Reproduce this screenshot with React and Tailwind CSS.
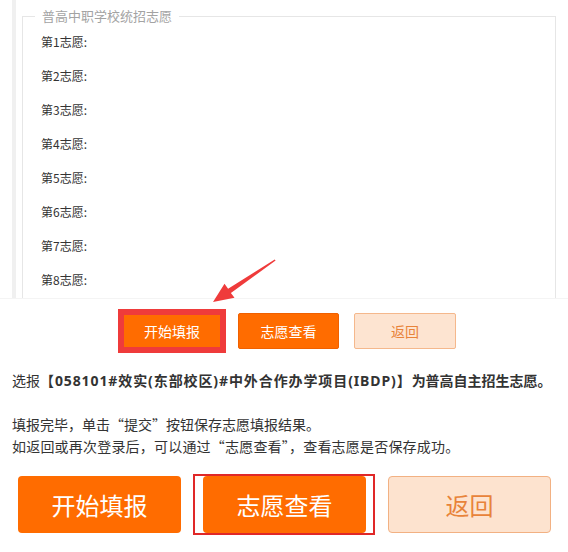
import React from "react";

const font = { fontFamily: '"Noto Sans CJK SC", "Noto Sans", sans-serif' };
const latinFirst = { fontFamily: '"Noto Sans", "Noto Sans CJK SC", sans-serif' };

function Row({ n }) {
  return (
    <div className="h-[34px] flex items-center pl-[18px] text-[12px] text-[#333]">
      第{n}志愿:
    </div>
  );
}

export default function App() {
  const rows = [1, 2, 3, 4, 5, 6, 7, 8];
  return (
    <div
      className="relative w-[568px] h-[552px] bg-white overflow-hidden"
      style={font}
    >
      {/* Top panel */}
      <div className="h-[299px] flex pl-[12px] border-b border-[#f4f4f4] overflow-hidden">
        <div className="w-[4px] bg-[#f0f0f0]" />
        <div className="ml-[6px] mt-[16px] w-[534px] relative border-t border-x border-[#e6e6e6]">
          <span className="absolute -top-[11px] left-[12px] bg-white px-[7px] text-[13px] leading-[20px] text-[#a3a3a3]">
            普高中职学校统招志愿
          </span>
          <div className="pt-[8px] flex flex-col">
            {rows.map((n) => (
              <Row key={n} n={n} />
            ))}
          </div>
        </div>
      </div>

      {/* Small buttons row */}
      <div className="mt-[10px] flex items-center pl-[118px]">
        <div className="border-[6px] border-[#ef3b3b]">
          <div className="w-[96px] h-[32px] bg-[#ff6c00] text-white text-[14px] flex items-center justify-center">
            开始填报
          </div>
        </div>
        <div className="ml-[12px] w-[101px] h-[36px] rounded-[2px] bg-[#ff6c00] border border-[#f06000] text-white text-[14px] flex items-center justify-center">
          志愿查看
        </div>
        <div className="ml-[15px] w-[102px] h-[36px] rounded-[2px] bg-[#fde4d1] border border-[#f5b88c] text-[#e8833a] text-[14px] flex items-center justify-center">
          返回
        </div>
      </div>

      {/* Arrow */}
      <svg
        className="absolute left-0 top-0 pointer-events-none"
        width="568"
        height="552"
        viewBox="0 0 568 552"
      >
        <polygon
          points="213,302 224.5,283.8 228.1,288.7 274.7,259.6 275.6,260.6 230.9,292.9 234.5,297.8"
          fill="#ef3b3b"
        />
      </svg>

      {/* Text */}
      <div className="pl-[12px] mt-[16px] text-[14px] leading-[22px] text-[#333]">
        <div className="whitespace-nowrap">
          选报
          <span className="font-bold tracking-[0.9px]" style={latinFirst}>
            【058101#效实(东部校区)#中外合作办学项目(IBDP)】
          </span>
          <span className="font-bold">为普高自主招生志愿。</span>
        </div>
        <div className="mt-[21px]">填报完毕，单击“提交”按钮保存志愿填报结果。</div>
        <div className="tracking-[0.2px]">如返回或再次登录后，可以通过“志愿查看”，查看志愿是否保存成功。</div>
      </div>

      {/* Big buttons */}
      <div className="mt-[17px] flex items-center pl-[18px]">
        <div className="w-[163px] h-[57px] rounded-[4px] bg-[#ff6c00] text-white text-[24px] flex items-center justify-center">
          开始填报
        </div>
        <div className="ml-[12px] border-2 border-[#e02828] pl-[8px] pr-[7px]">
          <div className="w-[163px] h-[57px] rounded-[4px] bg-[#ff6c00] text-white text-[24px] flex items-center justify-center">
            志愿查看
          </div>
        </div>
        <div className="ml-[13px] w-[163px] h-[57px] rounded-[4px] bg-[#fde3cf] border border-[#f2b183] text-[#e8833a] text-[24px] flex items-center justify-center">
          返回
        </div>
      </div>
    </div>
  );
}
